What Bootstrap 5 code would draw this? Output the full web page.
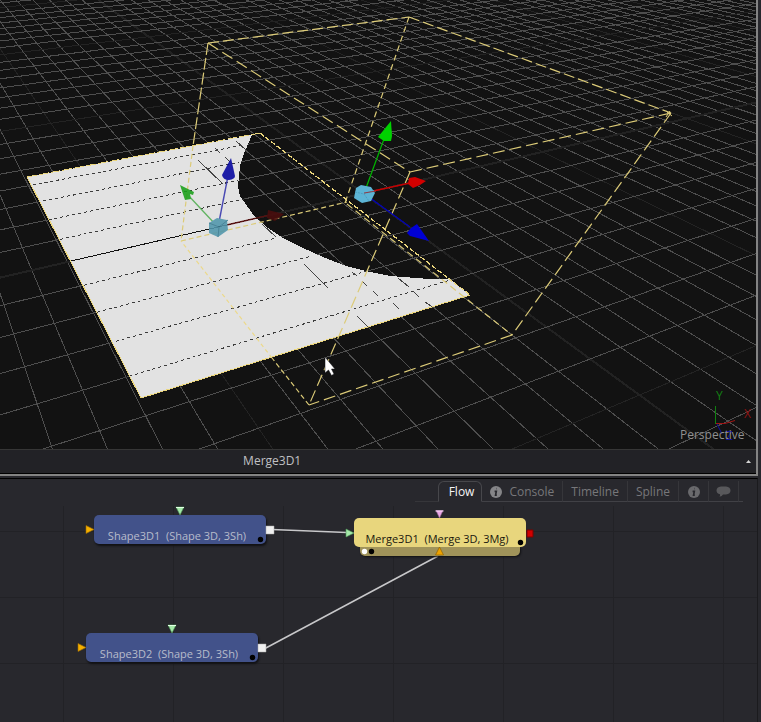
<!DOCTYPE html>
<html lang="en">
<head>
<meta charset="utf-8">
<meta name="viewport" content="width=device-width, initial-scale=1">
<title>Merge3D1</title>
<link href="https://cdn.jsdelivr.net/npm/bootstrap@5.3.0/dist/css/bootstrap.min.css" rel="stylesheet">
<style>
  body { background: #28282d; color: #c0c0c4; font-family: "Open Sans", "Noto Sans", sans-serif; font-size: 12px; line-height: 18px; }
  .viewer { background: #121212; border-right: 2px solid #838383; border-bottom: 2px solid #838383; margin-right: 3px; }
  .scene { width: 100%; height: auto; }
  .scene text { font-size: 12px; }
  .viewer-bar { background: #222226; border-top: 1px solid #363636; border-bottom: 1px solid #000; height: 25px; }
  .viewer-title { width: 72%; padding-bottom: 2px; }
  .tri-btn { width: 16px; height: 24px; color: #d4d4d4; }
  .flow { border-top: 1px solid #000; border-right: 1px solid #1b1b1e; margin: 2px 3px 0 0; }
  .flow-tabs { height: 23px; padding: 2px 14px 0 0; }
  .flow-tab { background: none; border: 0; border-bottom: 1px solid #414146; color: #77777a; gap: 7px; padding: 1px 8px 0 8px; }
  .flow-tab + .flow-tab { border-right: 1px solid #36363a; }
  .flow-tab.active { color: #f5f5f5; border: 1px solid #47474b; border-bottom-color: transparent; border-radius: 6px 6px 0 0; padding: 1px 7px 0 10px; }
  .flow-tab.icon-only { padding: 1px 7px 0 7px; }
  .tab-lead { width: 23px; border-bottom: 1px solid #36363a; }
  .tab-end { width: 4px; border-bottom: 1px solid #414146; }
  .node { width: 172px; height: 29px; border: 0; border-radius: 5px; padding: 12px 6px 0 0; color: #b8bccb; background: #42528a; box-shadow: 1px 2px 2px #111114; font-size: 11px; line-height: 17px; white-space: pre; }
  .node-merge { background: #e8d67d; color: #19170e; box-shadow: none; }
  .node-tray { width: 160px; height: 9px; background: #a0935a; border-radius: 0 0 5px 5px; box-shadow: 1px 1px 2px #111114; }
  #shape1 { left: 94px; top: 13px; }
  #shape2 { left: 86px; top: 131px; }
  #merge1 { left: 354px; top: 16px; }
  #tray1 { left: 360px; top: 45px; }
</style>
<script src="https://cdn.jsdelivr.net/npm/bootstrap@5.3.0/dist/js/bootstrap.bundle.min.js"></script>
</head>
<body class="min-vh-100 d-flex flex-column overflow-hidden">
<section class="viewer">
  <svg class="scene d-block" viewBox="0 0 756 449" role="img" aria-label="Perspective view of the merged shapes">
    <g id="grid" fill="none" shape-rendering="crispEdges"></g>
    <!-- image plane with the rounded cut -->
    <path d="M27 177L252 135L245 151L240 166L238 186L240 196L255 217L268 228L283 238L303 248L323 257L346 266L370 272L390 276L430 279L450 279L470 295L141 398Z" fill="#e2e2e2" shape-rendering="crispEdges"/>
    <g id="plane-lines" fill="none" stroke="#3c3c3c" shape-rendering="crispEdges"></g>
    <g fill="none" stroke="#444" shape-rendering="crispEdges">
      <path d="M198 160L223 184M215 148L220 153M225 157L230 162M236 141L246 150M304 264L328 288M262 224L276 237M352 272L357 276M362 281L367 286M373 291L378 296M357 316L368 327M393 303L399 309M398 278L409 287M413 291L419 297M425 302L434 308"/>
      <path d="M71 261L218 227" stroke="#111"/>
      <path d="M218 227L270 215" stroke="#3a1010"/>
    </g>
    <!-- plane outline -->
    <g fill="none" stroke="#ead57c" shape-rendering="crispEdges">
      <path d="M27 177L260 133" stroke-dasharray="10 2"/>
      <path d="M27 177L141 398M141 398L470 295"/>
      <path d="M260 133L470 295" stroke-width="1.3" stroke-dasharray="5 2"/>
    </g>
    <!-- light cone box -->
    <g fill="none" stroke="#dccb78" stroke-width="1.2">
      <path d="M208 43L409 17M409 17L671 113" stroke-dasharray="11 4"/>
      <path d="M208 43L410 172M410 172L671 113M671 113L512 335M512 335L309 405M410 172L309 405" stroke-dasharray="12 5"/>
      <path d="M208 43L193 146" stroke-dasharray="12 3"/>
      <path d="M193 146L181 241M181 241L347 202M309 405L272 358" stroke-dasharray="5 3"/>
      <path d="M272 358L181 241" stroke="#ecd98a" stroke-dasharray="4 3"/>
      <path d="M409 17L345 203" stroke-dasharray="6 4"/>
      <path d="M347 204L512 335" stroke-dasharray="7 4"/>
    </g>
    <path d="M670 111L666 117M667 112L672 116" stroke="#dccb78"/>
    <!-- plane gizmo -->
    <g opacity=".88">
      <path d="M218 227L270 215" stroke="#5a1212" stroke-width="1.3"/>
      <path d="M268 210L284 214L275 221L267 218Z" fill="#4a0d0d"/>
      <path d="M216 225L187 194" stroke="#4fae4f" stroke-width="1.3"/>
      <path d="M180 185L194 192L193 195L190 194L191 199L185 200Z" fill="#19a019"/>
      <path d="M219 222L228 176" stroke="#3333ad" stroke-width="1.4"/>
      <path d="M231 158L222 175Q223 180 229 180Q235 179 235 176Z" fill="#0404a0"/>
      <path d="M217 218L227 220L228 230L218 237L209 233L209 223Z" fill="#5096ac"/>
      <path d="M209 223L219 227L228 220M219 227L218 237" fill="none" stroke="#35788e"/>
    </g>
    <!-- light gizmo -->
    <path d="M366 188L384 139" stroke="#00b800" stroke-width="1.2"/>
    <path d="M391 121L378 137L384 141L391 141L392 136Z" fill="#00d200"/>
    <path d="M364 193L410 183" stroke="#c80000" stroke-width="1.3"/>
    <path d="M409 178L415 177L426 181L420 185L413 188L408 184Z" fill="#d20000"/>
    <path d="M366 195L410 227" stroke="#0000bb" stroke-width="1.3"/>
    <path d="M417 224L411 228L407 233L410 236L429 241Z" fill="#0000d4"/>
    <path d="M361 185L371 187L375 193L371 201L362 203L354 198L356 188Z" fill="#5cb4d5"/>
    <path d="M355 192L364 194L375 190M364 194L369 201" fill="none" stroke="#4c9fc0" stroke-dasharray="2 1"/>
    <path d="M364 193L376 191" stroke="#8d3b45"/>
    <!-- view axes -->
    <g fill="none" stroke-width="1">
      <path d="M715.5 424V406" stroke="#108010"/>
      <path d="M716 423.500H725L735 420.500" stroke="#a01414"/>
      <path d="M717 424L722 434" stroke="#1010a0"/>
    </g>
    <text x="716" y="400" fill="#128012">Y</text>
    <text x="744" y="418" fill="#8e1212">X</text>
    <text x="726" y="440" fill="#1010a0">Z</text>
    <text x="680" y="439" fill="#909090">Perspective</text>
    <!-- pointer -->
    <path d="M325 357V373L328.500 370L331.500 375.500L334 374L331.500 369H335Z" fill="#fff" stroke="#0c0c10" stroke-width=".5"/>
  </svg>
  <div class="viewer-bar d-flex justify-content-between align-items-center">
    <div class="viewer-title text-center">Merge3D1</div>
    <button type="button" class="tri-btn btn p-0 border-0 rounded-0 d-flex align-items-center justify-content-center" aria-label="Show view list">
      <svg width="7" height="5" aria-hidden="true"><path d="M1 4L3.500 1L6 4Z" fill="currentColor"/></svg>
    </button>
  </div>
</section>

<section class="flow flex-grow-1 d-flex flex-column">
  <div class="flow-tabs d-flex justify-content-end" role="tablist">
    <span class="tab-lead"></span>
    <button type="button" role="tab" aria-selected="true" class="flow-tab active">Flow</button>
    <button type="button" role="tab" aria-selected="false" class="flow-tab d-flex align-items-center">
      <svg width="12" height="12" viewBox="0 0 12 12" aria-hidden="true"><circle cx="6" cy="6" r="6" fill="#858588"/><path d="M6.600 2.600h.4M4.600 5.300h1.700l-.7 3.900h1.200" fill="none" stroke="#28282d" stroke-width="1.700"/></svg>
      Console
    </button>
    <button type="button" role="tab" aria-selected="false" class="flow-tab">Timeline</button>
    <button type="button" role="tab" aria-selected="false" class="flow-tab">Spline</button>
    <button type="button" role="tab" aria-selected="false" class="flow-tab icon-only d-flex align-items-center" aria-label="Info">
      <svg width="15" height="12" viewBox="0 0 15 12" aria-hidden="true"><circle cx="8" cy="6" r="6" fill="#69696c"/><path d="M8.600 2.600h.4M6.600 5.300h1.700l-.7 3.900h1.200" fill="none" stroke="#28282d" stroke-width="1.700"/></svg>
    </button>
    <button type="button" role="tab" aria-selected="false" class="flow-tab icon-only d-flex align-items-center" aria-label="Comments">
      <svg width="15" height="11" viewBox="0 0 15 11" aria-hidden="true"><path d="M5 .5H10Q14.500 1 14.500 4.500Q14.500 8 10 8.500H7Q6 10.500 3.500 10.800Q4.500 9.500 4 8.300Q.5 7.500 .5 4.500Q.5 1 5 .5Z" fill="#58585b"/></svg>
    </button>
    <span class="tab-end"></span>
  </div>
  <div class="flow-canvas position-relative flex-grow-1">
    <svg class="position-absolute top-0 start-0 w-100 h-100" aria-hidden="true">
      <g fill="none" stroke="#222226" shape-rendering="crispEdges">
        <path d="M63.500 4V400M173.500 4V400M283.500 4V400M393.500 4V400M503.500 4V400M613.500 4V400M723.500 4V400"/>
        <path d="M0 29.500H757M0 95.500H757M0 161.500H757"/>
      </g>
      <path d="M272 27.500L347 30.500M264 147L438 54" fill="none" stroke="#c8c8ca" stroke-width="1.500"/>
    </svg>
    <button type="button" id="shape1" class="node position-absolute">Shape3D1  (Shape 3D, 3Sh)</button>
    <button type="button" id="shape2" class="node position-absolute">Shape3D2  (Shape 3D, 3Sh)</button>
    <div id="tray1" class="node-tray position-absolute"></div>
    <button type="button" id="merge1" class="node node-merge position-absolute">Merge3D1  (Merge 3D, 3Mg)</button>
    <svg class="position-absolute top-0 start-0 w-100 h-100 pe-none" aria-hidden="true">
      <defs>
        <g id="ports">
          <path d="M-8 10.500V18.500L0 14.500Z" fill="#f5b000" stroke="#a06c00" stroke-width=".6"/>
          <path d="M82 -8H90L86 0Z" fill="#a4e8a8" stroke="#4f9a58" stroke-width=".6"/>
          <path d="M82 -7.500H90" stroke="#e2ffe4"/>
          <path d="M172 11H180V19H172Z" fill="#f0f0f0" stroke="#aaa" stroke-width=".5"/>
          <circle cx="166.500" cy="24.500" r="2.700" fill="#000"/>
        </g>
      </defs>
      <use href="#ports" x="94" y="13"/>
      <use href="#ports" x="86" y="131"/>
      <path d="M436 8.500H443L439.500 16Z" fill="#e8a6e4" stroke="#9c6a9c" stroke-width=".6"/>
      <path d="M435.500 9H443.500" stroke="#fbdcfa"/>
      <path d="M346 27V35L354 31Z" fill="#a4e8a8" stroke="#4f9a58" stroke-width=".6"/>
      <path d="M527 28H533V35H527Z" fill="#d00000" stroke="#7c0000"/>
      <path d="M435.500 53L439.500 45L443.500 53Z" fill="#eda200" stroke="#916200" stroke-width=".7"/>
      <circle cx="520.500" cy="40.500" r="2.700" fill="#000"/>
      <circle cx="364.500" cy="49.500" r="2.700" fill="#fff"/>
      <circle cx="371.500" cy="49.500" r="2.700" fill="#000"/>
    </svg>
  </div>
</section>
<script>
  // Ground grid: both line families converge on the same horizon.
  const HORIZON = -191, BASE = 448, MAJOR = 8;
  const vpZ = -163, vpX = 2022;
  const depthLine = k => ({ from: 712 + 55 * k, vp: vpZ });
  const crossLine = k => ({ from: -735 + 156.2 * k, vp: vpX });
  const xAt = (l, y) => l.from + (l.vp - l.from) * (BASE - y) / (BASE - HORIZON);
  const yAt = (l, x) => BASE - (x - l.from) / (l.vp - l.from) * (BASE - HORIZON);
  const add = (group, d, attrs) => {
    const p = document.createElementNS('http://www.w3.org/2000/svg', 'path');
    p.setAttribute('d', d);
    for (const key in attrs) p.setAttribute(key, attrs[key]);
    document.getElementById(group).append(p);
  };
  const look = k => k === 0 ? { stroke: '#222', 'stroke-width': 2 }
    : { stroke: k % MAJOR ? '#4e4e4e' : '#232323' };
  for (let k = -14; k <= 41; k++) {
    const l = depthLine(k);
    add('grid', `M${xAt(l, 450)} 450L${xAt(l, -2)} -2`, look(k));
  }
  for (let k = -27; k <= 9; k++) {
    const l = crossLine(k);
    add('grid', `M-2 ${yAt(l, -2)}L760 ${yAt(l, 760)}`, look(k));
  }
  // Grid lines seen through the plane, clipped to its left and right edges.
  const right = { '-4': 244, '-3': 239, '-2': 238, '-1': 248, 1: 276, 2: 312, 3: 370, 4: 448 };
  for (const k in right) {
    const l = crossLine(+k);
    const x0 = 72 + k * 12.1 + k * k * 0.2;
    add('plane-lines', `M${x0} ${yAt(l, x0)}L${right[k]} ${yAt(l, right[k])}`, { 'stroke-dasharray': '3 3' });
  }
</script>
</body>
</html>
